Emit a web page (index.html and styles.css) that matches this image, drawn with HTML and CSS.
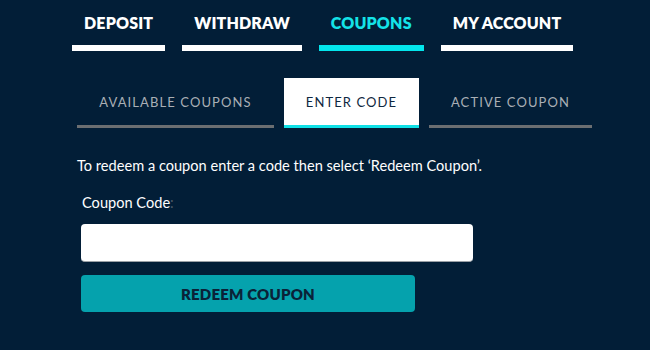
FILE: index.html
```html
<!DOCTYPE html>
<html lang="en">
<head>
<meta charset="utf-8">
<title>Coupons</title>
<link rel="stylesheet" href="styles.css">
</head>
<body>
<nav class="main-tabs">
  <a class="main-tab">DEPOSIT</a>
  <a class="main-tab">WITHDRAW</a>
  <a class="main-tab is-active">COUPONS</a>
  <a class="main-tab">MY ACCOUNT</a>
</nav>
<div class="sub-tabs">
  <a class="sub-tab sub-available">AVAILABLE COUPONS</a>
  <a class="sub-tab sub-enter is-active">ENTER CODE</a>
  <a class="sub-tab sub-active">ACTIVE COUPON</a>
</div>
<section class="redeem">
  <p class="intro">To redeem a coupon enter a code then select ‘Redeem Coupon’.</p>
  <form class="redeem-form">
    <label class="field-label">Coupon Code<span class="colon">:</span></label>
    <input class="field-input" type="text">
    <button class="redeem-btn" type="button">REDEEM COUPON</button>
  </form>
</section>
</body>
</html>
```
FILE: styles.css
```css
html, body {
  margin: 0;
  padding: 0;
  background: #021e37;
  font-family: Lato, "Open Sans", sans-serif;
  color: #fff;
}
.main-tabs {
  display: flex;
  gap: 17px;
  padding: 13px 0 0 72px;
}
.main-tab {
  padding: 0 12px 12px;
  line-height: 20px;
  font-size: 16px;
  font-weight: 800;
  letter-spacing: 0.15px;
  color: #fff;
  border-bottom: 6px solid #fff;
}
.main-tab.is-active {
  color: #14e3e8;
  border-bottom-color: #03e6ec;
}
.sub-tabs {
  display: flex;
  gap: 10px;
  margin: 27px 0 0 77px;
}
.sub-tab {
  height: 46px;
  display: flex;
  align-items: center;
  justify-content: center;
  font-size: 13px;
  letter-spacing: 1.1px;
  color: #a9afb5;
  border-bottom: 3px solid #6b6e71;
  padding-top: 1px;
  box-sizing: content-box;
}
.sub-available { width: 197px; }
.sub-enter { width: 135px; }
.sub-active { width: 163px; }
.sub-tab.is-active {
  background: #fff;
  color: #0f2740;
  border-bottom-color: #0fe0e6;
}
.redeem {
  padding: 0 0 0 77px;
}
.intro {
  margin: 28px 0 0;
  font-size: 14.6px;
  line-height: 20px;
}
.redeem-form {
  display: flex;
  flex-direction: column;
  align-items: flex-start;
  padding-left: 4px;
  margin-top: 17px;
}
.field-label {
  font-size: 14.6px;
  line-height: 20px;
  padding-left: 1px;
}
.colon { color: #4c5a68; }
.field-input {
  margin-top: 11px;
  width: 392px;
  height: 38px;
  box-sizing: border-box;
  border: none;
  border-bottom: 1px solid #9aa0a6;
  border-radius: 4px;
  background: #fff;
}
.redeem-btn {
  margin-top: 13px;
  width: 334px;
  height: 37px;
  border: none;
  border-radius: 4px;
  background: #05a2ad;
  color: #0a2238;
  font-family: Lato, sans-serif;
  font-size: 15px;
  font-weight: 800;
  letter-spacing: 0.2px;
}
```
